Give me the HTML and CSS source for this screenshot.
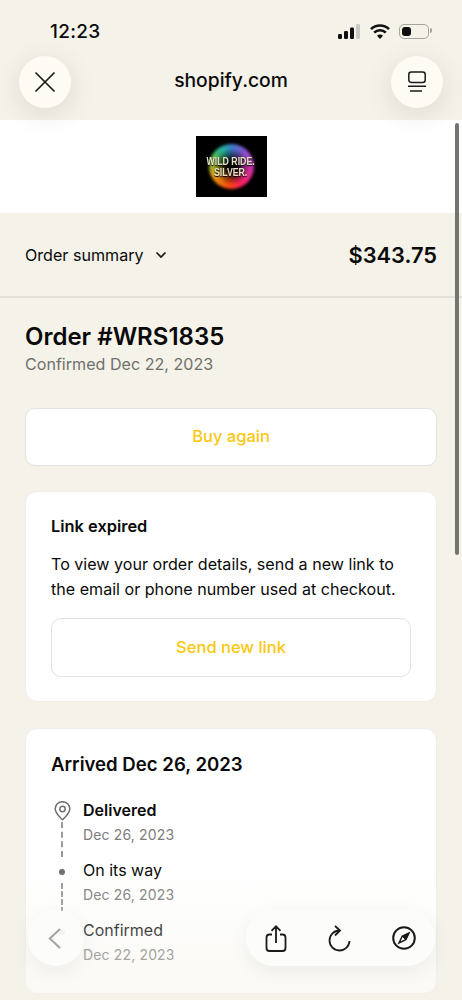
FILE: index.html
```html
<!DOCTYPE html>
<html lang="en">
<head>
  <meta charset="UTF-8" />
  <title>Order #WRS1835</title>
  <link rel="stylesheet" href="styles.css">
</head>
<body>

<div class="phone">
  <!-- status bar + browser top bar -->
  <div class="topbar">
    <div class="status">
      <span class="clock">12:23</span>
      <div class="status-icons">
        <svg width="23" height="15" viewBox="0 0 23 15"><rect x="0" y="10" width="4" height="5" rx="1.2" fill="#111"/><rect x="6" y="7" width="4" height="8" rx="1.2" fill="#111"/><rect x="12" y="3.5" width="4" height="11.5" rx="1.2" fill="#111"/><rect x="18" y="0" width="4" height="15" rx="1.2" fill="#c9c8c2"/></svg>
        <svg width="20" height="15" viewBox="0 0 20 15" fill="none" stroke="#111" stroke-width="2.6"><path d="M1 5.200a12.800 12.800 0 0 1 18 0"/><path d="M4.200 8.600a8.200 8.200 0 0 1 11.600 0"/><path d="M10 15l-3-3.200a4.200 4.200 0 0 1 6 0z" fill="#111" stroke="none"/></svg>
        <div class="battery"><div class="battery-level"></div></div>
      </div>
    </div>
    <div class="nav">
      <button class="round-btn">
        <svg width="22" height="22" viewBox="0 0 22 22" fill="none" stroke="#1a1a1a" stroke-width="1.7"><path d="M1.5 1.5l19 19M20.500 1.500l-19 19"/></svg>
      </button>
      <span class="domain">shopify.com</span>
      <button class="round-btn">
        <svg width="20" height="22" viewBox="0 0 20 22" fill="none" stroke="#1a1a1a" stroke-width="1.5"><rect x="1.800" y="1" width="16.400" height="10.500" rx="2.500"/><path d="M1 15.200h18M3 20h12"/></svg>
      </button>
    </div>
  </div>

  <!-- shop logo -->
  <div class="logo-band">
    <div class="logo">
      <div class="logo-disc"></div>
      <div class="logo-text">WILD RIDE.<br>SILVER.</div>
    </div>
  </div>

  <div class="summary">
    <div class="summary-label">
      <span>Order summary</span>
      <svg width="12" height="8" viewBox="0 0 12 8" fill="none" stroke="#1a1a1a" stroke-width="1.700"><path d="M1.500 1.500L6 6l4.500-4.500"/></svg>
    </div>
    <span class="summary-total">$343.75</span>
  </div>

  <div class="content">
    <h1 class="order-title">Order #WRS1835</h1>
    <p class="order-date">Confirmed Dec 22, 2023</p>

    <div class="btn btn-main">Buy again</div>

    <div class="card card-link">
      <h2 class="card-small-title">Link expired</h2>
      <p class="card-text">To view your order details, send a new link to the email or phone number used at checkout.</p>
      <div class="btn btn-card">Send new link</div>
    </div>

    <div class="card card-track">
      <h2 class="card-title">Arrived Dec 26, 2023</h2>
      <ul class="timeline">
        <li class="step">
          <div class="marker">
            <svg class="pin" width="17" height="20" viewBox="0 0 17 20" fill="none" stroke="#6f6f6f" stroke-width="1.500"><path d="M8.500 18.800C4.500 14.800 1.200 11.800 1.200 8a7.300 7.300 0 0 1 14.600 0c0 3.800-3.300 6.800-7.300 10.800z"/><circle cx="8.500" cy="8" r="2.700"/></svg>
            <div class="dash dash-first"></div>
          </div>
          <div>
            <div class="step-name step-current">Delivered</div>
            <div class="step-date">Dec 26, 2023</div>
          </div>
        </li>
        <li class="step">
          <div class="marker">
            <div class="dot"></div>
            <div class="dash"></div>
          </div>
          <div>
            <div class="step-name">On its way</div>
            <div class="step-date">Dec 26, 2023</div>
          </div>
        </li>
        <li class="step">
          <div class="marker">
            <div class="dot"></div>
          </div>
          <div>
            <div class="step-name">Confirmed</div>
            <div class="step-date">Dec 22, 2023</div>
          </div>
        </li>
      </ul>
    </div>
  </div>

  <!-- things floating over the page -->
  <div class="scrollbar"></div>
  <div class="bottom-fade"></div>
  <button class="float-back">
    <svg width="13" height="21" viewBox="0 0 13 21" fill="none" stroke="#a3a3a3" stroke-width="2"><path d="M12 1L1.800 10.500 12 20"/></svg>
  </button>
  <div class="float-tools">
    <svg width="22" height="27" viewBox="0 0 22 27" fill="none" stroke="#1a1a1a" stroke-width="1.800"><path d="M7 9.500H4.500a3 3 0 0 0-3 3V23a3 3 0 0 0 3 3h13a3 3 0 0 0 3-3V12.500a3 3 0 0 0-3-3H15"/><path d="M11 18V1.500M6.500 5.800L11 1.300l4.500 4.500"/></svg>
    <svg width="23" height="27" viewBox="0 0 23 27" fill="none" stroke="#1a1a1a" stroke-width="1.800"><path d="M11.500 5.500a10 10 0 1 0 10 10.500"/><path d="M7 1l5 4.500L7 10.500"/></svg>
    <svg width="24" height="24" viewBox="0 0 24 24" fill="none" stroke="#1a1a1a" stroke-width="2"><circle cx="12" cy="12" r="10.800"/><path d="M17 7l-3.200 6.800-6.800 3.200 3.200-6.800z" stroke-width="1.500"/><path d="M17 7l-3.200 6.800-3.600-3.600z" fill="#1a1a1a" stroke-width="1"/></svg>
  </div>
</div>

</body>
</html>
```

FILE: styles.css
```css
body {
  margin: 0;
  font-family: Inter, "Liberation Sans", Arial, sans-serif;
  color: #0a0a0a;
  background-color: #f4f2e9;
}
.phone {
  position: relative;
  width: 462px;
  height: 1000px;
  overflow: hidden;
  background-color: #f4f2e9;
}

/* top bar */
.topbar {
  position: relative;
  z-index: 2;
  height: 120px;
  background-color: #f4f2e9;
}
.status {
  display: flex;
  justify-content: space-between;
  align-items: center;
  height: 31px;
  padding: 16px 33px 0 50px;
}
.clock {
  font-size: 19px;
  font-weight: 500;
  letter-spacing: 0.3px;
}
.status-icons {
  display: flex;
  align-items: center;
  gap: 9px;
}
.battery {
  position: relative;
  box-sizing: border-box;
  width: 30px;
  height: 15px;
  padding: 2px;
  border: 1.500px solid #a5a49e;
  border-radius: 5px;
}
.battery::after {
  content: "";
  position: absolute;
  right: -4px;
  top: 3px;
  width: 2px;
  height: 5px;
  border-radius: 0 2px 2px 0;
  background-color: #a5a49e;
}
.battery-level {
  width: 9px;
  height: 100%;
  border-radius: 3px;
  background-color: #0f0f0f;
}
.nav {
  display: flex;
  justify-content: space-between;
  align-items: center;
  padding: 9px 19px 0;
}
.round-btn {
  display: flex;
  justify-content: center;
  align-items: center;
  width: 52px;
  height: 52px;
  padding: 0;
  border: 0;
  border-radius: 50%;
  background-color: #fdfbf3;
  box-shadow: 0 6px 26px rgba(90, 85, 70, 0.14);
}
.domain {
  margin-bottom: 4px;
  font-size: 19.300px;
  font-weight: 500;
}

/* logo */
.logo-band {
  display: flex;
  justify-content: center;
  align-items: flex-start;
  height: 93px;
  padding-top: 16px;
  box-sizing: border-box;
  background-color: #fff;
}
.logo {
  position: relative;
  display: flex;
  justify-content: center;
  align-items: center;
  width: 71px;
  height: 61px;
  background-color: #000;
}
.logo-disc {
  position: absolute;
  left: 13px;
  top: 8px;
  width: 45px;
  height: 45px;
  border-radius: 50%;
  background:
    radial-gradient(circle, #000 0 15%, rgba(0, 0, 0, 0) 58%),
    conic-gradient(#3f7fd0, #8a4fd0 12%, #d630a8 28%, #ff2060 42%, #ff4a10 52%, #e8a810 68%, #6ab83a 80%, #20b8a0 92%, #3f7fd0);
  filter: blur(1.500px);
}
.logo-text {
  position: relative;
  font-family: "Liberation Sans", Arial, sans-serif;
  font-size: 11.500px;
  line-height: 11px;
  font-weight: 700;
  text-align: center;
  white-space: nowrap;
  color: #e8e2c4;
  text-shadow: 0 1px 1px #000;
  transform: scaleX(0.76);
}

/* summary row */
.summary {
  display: flex;
  justify-content: space-between;
  align-items: center;
  box-sizing: border-box;
  height: 85px;
  padding: 0 25px;
  border-bottom: 2px solid #e2e0d8;
}
.summary-label {
  display: flex;
  align-items: center;
  gap: 11px;
  font-size: 16.100px;
}
.summary-total {
  font-size: 21.800px;
  font-weight: 600;
}

/* main content */
.content {
  padding: 25px 25px 0;
}
.order-title {
  margin: 0;
  font-size: 24px;
  line-height: 28px;
  font-weight: 600;
}
.order-date {
  margin: 3px 0 0;
  font-size: 16.100px;
  line-height: 20px;
  color: #70706c;
}
.btn {
  display: flex;
  justify-content: center;
  align-items: center;
  box-sizing: border-box;
  padding-bottom: 2px;
  border: 1px solid #e2e2de;
  border-radius: 10px;
  background-color: #fff;
  font-size: 16.500px;
  font-weight: 500;
  color: #fdc70c;
}
.btn-main {
  height: 58px;
  margin-top: 34px;
}
.card {
  box-sizing: border-box;
  border: 1px solid #efeee8;
  border-radius: 12px;
  background-color: #fff;
}
.card-link {
  height: 211px;
  margin-top: 25px;
  padding: 24px 25px 0;
}
.card-small-title {
  margin: 0;
  font-size: 16.400px;
  line-height: 20px;
  font-weight: 600;
}
.card-text {
  margin: 16px 0 0;
  font-size: 16.100px;
  line-height: 25px;
}
.btn-card {
  height: 59px;
  margin-top: 16px;
}
.card-track {
  height: 266px;
  margin-top: 26px;
  padding: 23px 25px 0;
}
.card-title {
  margin: 0;
  font-size: 18.600px;
  line-height: 24px;
  font-weight: 600;
}

/* timeline */
.timeline {
  margin: 24px 0 0;
  padding: 0;
  list-style: none;
}
.step {
  display: flex;
  gap: 10px;
  height: 60px;
}
.marker {
  position: relative;
  display: flex;
  flex-direction: column;
  align-items: center;
  width: 22px;
}
.pin {
  flex: none;
  margin-top: 1px;
}
.dot {
  width: 6px;
  height: 6px;
  margin-top: 9px;
  border-radius: 50%;
  background-color: #6f6f6f;
}
.dash {
  width: 0;
  height: 30px;
  margin-top: 8px;
  border-left: 2px dashed #9a9a9a;
}
.dash-first {
  height: 35px;
  margin-top: 1px;
}
.step-name {
  font-size: 16px;
  line-height: 20px;
}
.step-current {
  font-weight: 600;
}
.step-date {
  margin-top: 6px;
  font-size: 14px;
  line-height: 18px;
  letter-spacing: 0.15px;
  color: #7c7c7c;
}

/* overlays */
.scrollbar {
  position: absolute;
  z-index: 3;
  right: 3px;
  top: 123px;
  width: 4px;
  height: 432px;
  border-radius: 2px;
  background-color: #747470;
}
.bottom-fade {
  position: absolute;
  z-index: 3;
  left: 0;
  right: 0;
  bottom: 0;
  height: 130px;
  background: linear-gradient(rgba(244, 242, 233, 0), rgba(244, 242, 233, 0.5));
}
.float-back {
  position: absolute;
  z-index: 4;
  left: 28px;
  top: 910px;
  display: flex;
  justify-content: center;
  align-items: center;
  width: 56px;
  height: 56px;
  padding: 0 3px 0 0;
  border: 0;
  border-radius: 50%;
  background-color: rgba(252, 252, 250, 0.92);
  box-shadow: 0 6px 18px rgba(90, 85, 70, 0.08);
}
.float-tools {
  position: absolute;
  z-index: 4;
  left: 246px;
  top: 910px;
  display: flex;
  justify-content: space-between;
  align-items: center;
  box-sizing: border-box;
  width: 189px;
  height: 56px;
  padding: 0 19px;
  border-radius: 28px;
  background-color: rgba(252, 252, 250, 0.96);
  box-shadow: 0 6px 18px rgba(90, 85, 70, 0.08);
}
```
